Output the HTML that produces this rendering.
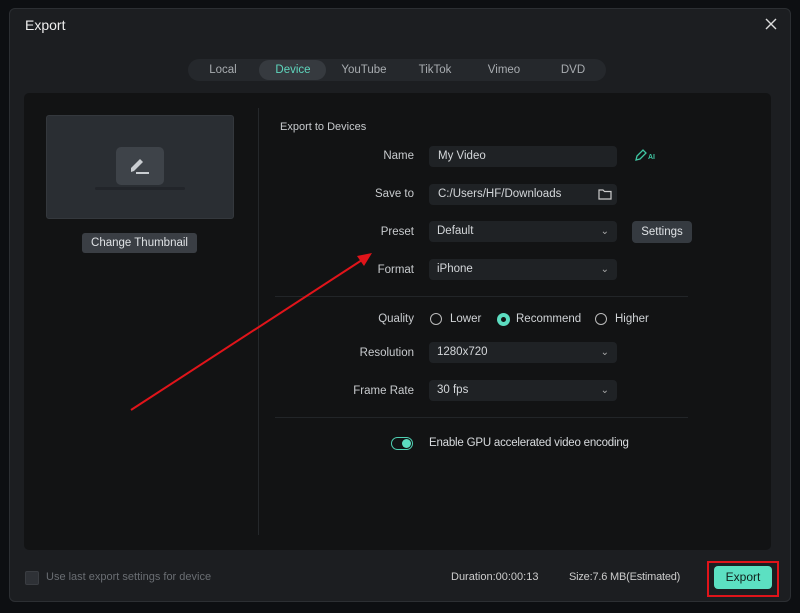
<!DOCTYPE html><html><head><style>
body{margin:0;width:800px;height:613px;background:#0d0f12;font-family:"Liberation Sans",sans-serif;position:relative;overflow:hidden;color:#d0d3d6}
.a{position:absolute}
.dlg{left:9px;top:8px;width:782px;height:594px;background:#1c1e21;border-radius:6px;border:1px solid #2c2f33;box-sizing:border-box}
.lbl{font-size:11.5px;color:#c8cbce;text-align:right;width:150px;left:264px}
.f{left:429px;width:188px;height:21px;background:#1f2225;border-radius:4px;font-size:11.5px;color:#d4d7da;line-height:21px;text-indent:9px}
.chev{position:absolute;right:8px;top:0;font-size:10px;color:#aaa}
.tab{top:59px;height:22px;line-height:22px;font-size:11.5px;color:#a8acb0;text-align:center}
.rad{width:10px;height:10px;border:1.5px solid #bbb;border-radius:50%}
</style></head><body>
<div class="a dlg"></div>
<div class="a" style="left:25px;top:17px;font-size:14px;color:#eee">Export</div>
<svg class="a" style="left:765px;top:18px" width="12" height="12"><path d="M1 1 L11 11 M11 1 L1 11" stroke="#ddd" stroke-width="1.4"/></svg>
<div class="a" style="left:188px;top:59px;width:418px;height:22px;background:#25282c;border-radius:11px"></div>
<div class="a" style="left:259px;top:60px;width:67px;height:20px;background:#363a3f;border-radius:10px"></div>
<div class="a tab" style="left:193px;width:60px">Local</div>
<div class="a tab" style="left:263px;width:60px;color:#5fd6bd">Device</div>
<div class="a tab" style="left:334px;width:60px">YouTube</div>
<div class="a tab" style="left:405px;width:60px">TikTok</div>
<div class="a tab" style="left:474px;width:60px">Vimeo</div>
<div class="a tab" style="left:543px;width:60px">DVD</div>
<div class="a" style="left:24px;top:93px;width:747px;height:457px;background:#121314;border-radius:5px"></div>
<div class="a" style="left:46px;top:115px;width:188px;height:104px;background:#2a2e33;border-radius:3px;border:1px solid #34383d;box-sizing:border-box"></div>
<div class="a" style="left:116px;top:147px;width:48px;height:38px;background:#3e4349;border-radius:5px"></div>
<svg class="a" style="left:128px;top:155px" width="24" height="22"><path d="M3 17 L3 13 L12 4 L15 7 L6 16 Z" fill="#c9cdd1"/><rect x="8" y="17" width="13" height="2" fill="#c9cdd1"/></svg>
<div class="a" style="left:95px;top:187px;width:90px;height:3px;background:#22252a;border-radius:2px"></div>
<div class="a" style="left:82px;top:233px;width:115px;height:20px;background:#3a3e44;border-radius:3px;font-size:11.5px;line-height:20px;text-align:center;color:#dfe2e5">Change Thumbnail</div>
<div class="a" style="left:258px;top:108px;width:1px;height:427px;background:#25282b"></div>
<div class="a" style="left:275px;top:296px;width:413px;height:1px;background:#222528"></div>
<div class="a" style="left:275px;top:417px;width:413px;height:1px;background:#222528"></div>
<div class="a" style="left:280px;top:121px;font-size:11px;color:#c8cbce">Export to Devices</div>
<div class="a lbl" style="top:150px">Name</div><div class="a f" style="top:146px">My Video</div>
<div class="a" style="left:635px;top:149px;font-size:11px;color:#3fc7a3"><svg width="13" height="12" style="vertical-align:-2px"><path d="M1 11 L2 7 L8 1 L11 4 L5 10 Z" fill="none" stroke="#3fc7a3" stroke-width="1.3"/></svg><b style="font-size:7px">AI</b></div>
<div class="a lbl" style="top:188px">Save to</div><div class="a f" style="top:184px">C:/Users/HF/Downloads<svg style="position:absolute;right:5px;top:4px" width="14" height="12"><path d="M1 2 H5 L6.5 3.5 H13 V11 H1 Z" fill="none" stroke="#ccc" stroke-width="1.2"/></svg></div>
<div class="a lbl" style="top:226px">Preset</div><div class="a f" style="top:221px;text-indent:8px">Default<span class="chev">⌄</span></div>
<div class="a" style="left:632px;top:221px;width:60px;height:22px;background:#353a40;border-radius:4px;font-size:11.5px;line-height:22px;text-align:center;color:#dfe2e5">Settings</div>
<div class="a lbl" style="top:264px">Format</div><div class="a f" style="top:259px;text-indent:8px">iPhone<span class="chev">⌄</span></div>
<div class="a lbl" style="top:313px">Quality</div>
<div class="a rad" style="left:430px;top:313px"></div><div class="a" style="left:450px;top:313px;font-size:11.5px">Lower</div>
<div class="a" style="left:497px;top:313px;width:13px;height:13px;border-radius:50%;background:#5cdcc0"></div><div class="a" style="left:501px;top:317px;width:5px;height:5px;border-radius:50%;background:#121314"></div>
<div class="a" style="left:516px;top:313px;font-size:11.5px">Recommend</div>
<div class="a rad" style="left:595px;top:313px"></div><div class="a" style="left:615px;top:313px;font-size:11.5px">Higher</div>
<div class="a lbl" style="top:347px">Resolution</div><div class="a f" style="top:342px;text-indent:8px">1280x720<span class="chev">⌄</span></div>
<div class="a lbl" style="top:385px">Frame Rate</div><div class="a f" style="top:380px;text-indent:8px">30 fps<span class="chev">⌄</span></div>
<div class="a" style="left:391px;top:437px;width:22px;height:13px;border:1.5px solid #4fcfb2;border-radius:8px;box-sizing:border-box"></div>
<div class="a" style="left:402px;top:439px;width:9px;height:9px;border-radius:50%;background:#5cdcc0"></div>
<div class="a" style="left:429px;top:437px;font-size:11.5px;color:#d8dbde;letter-spacing:-0.2px">Enable GPU accelerated video encoding</div>
<div class="a" style="left:25px;top:571px;width:12px;height:12px;background:#2e3136;border:1px solid #3a3d42;border-radius:2px"></div>
<div class="a" style="left:46px;top:571px;font-size:11px;color:#6a6e73">Use last export settings for device</div>
<div class="a" style="left:451px;top:571px;font-size:11px;color:#ccc">Duration:00:00:13</div>
<div class="a" style="left:569px;top:571px;font-size:11px;color:#ccc;letter-spacing:-0.2px">Size:7.6 MB(Estimated)</div>
<div class="a" style="left:707px;top:561px;width:72px;height:36px;border:2px solid #e0141a;box-sizing:border-box"></div>
<div class="a" style="left:714px;top:566px;width:58px;height:23px;background:#5ce0c2;border-radius:4px;font-size:12px;line-height:23px;text-align:center;color:#10201c">Export</div>
<svg class="a" style="left:0;top:0" width="800" height="613"><line x1="131" y1="410" x2="362" y2="260" stroke="#e0141a" stroke-width="2"/><path d="M372 253 L357 256 L364 266 Z" fill="#e0141a"/></svg>
</body></html>
